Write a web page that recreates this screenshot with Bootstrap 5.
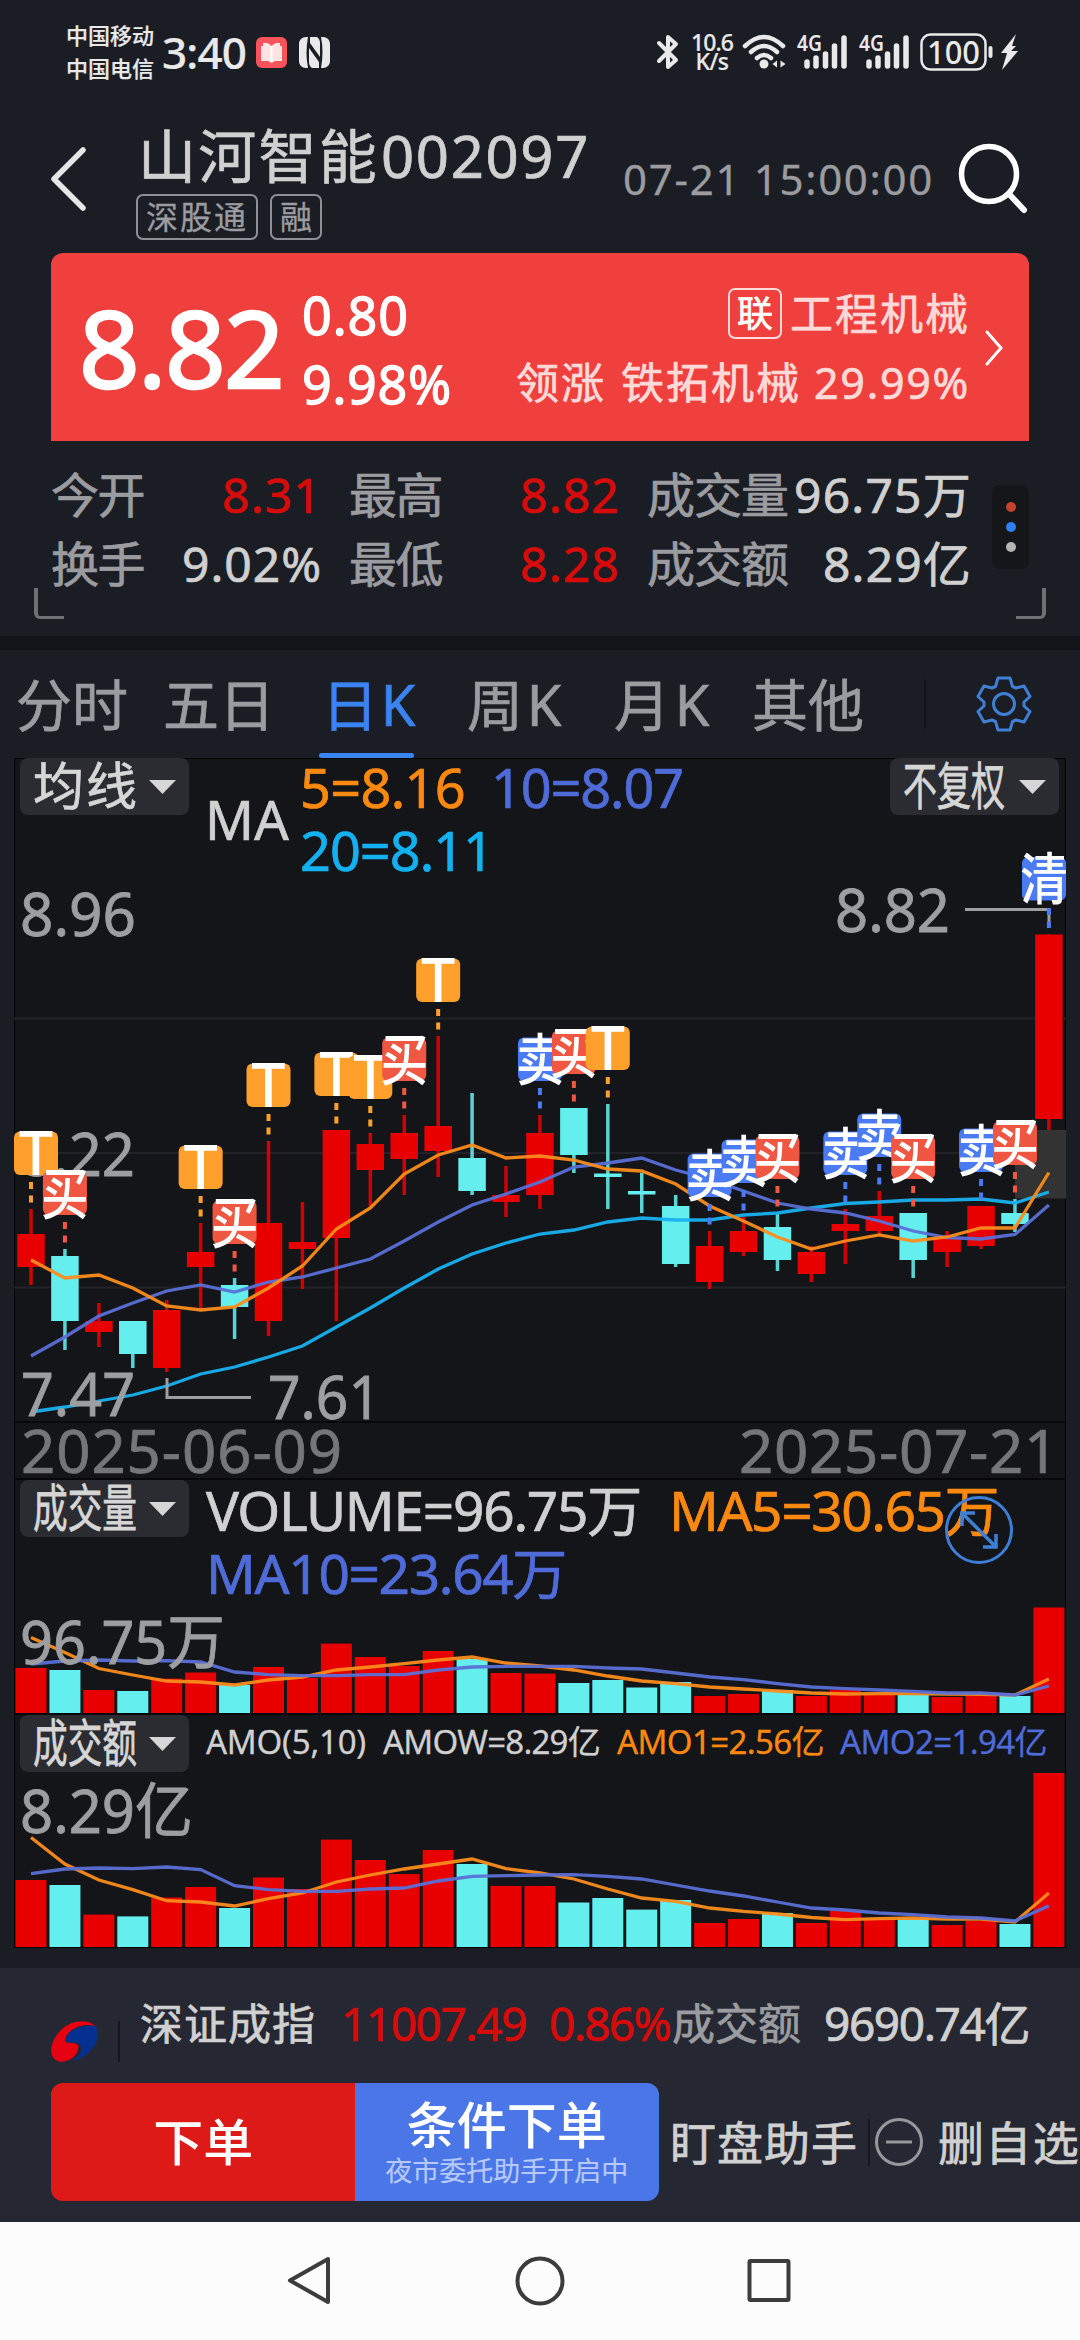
<!DOCTYPE html>
<html lang="zh-CN">
<head>
<meta charset="utf-8">
<meta name="viewport" content="width=device-width, initial-scale=1">
<title>山河智能 002097</title>
<link rel="stylesheet" href="https://cdn.jsdelivr.net/npm/bootstrap@5.3.0/dist/css/bootstrap.min.css">
<style>
body{width:1080px;height:2340px;overflow:hidden;background:#1b1d25;color:#d0d0d0;font-family:"Noto Sans","Noto Sans CJK SC",sans-serif;line-height:1;-webkit-text-stroke:.7px currentColor}
svg{display:block;flex:none;overflow:visible}
svg text{font-family:"Noto Sans","Noto Sans CJK SC",sans-serif}
[data-w]{display:inline-block;flex:none;white-space:nowrap}
.dim{color:#9b9ca0}.up{color:#d80b0b}.c5{color:#fb890f}.c10{color:#4f6bd8}.c20{color:#13b1f0}
/* status bar */
.statusbar{height:104px;padding:0 62px 0 66px;color:#e9e9ea;-webkit-text-stroke:.2px currentColor}
.carrier{font-size:22px;line-height:33px;font-weight:500}
.clock{font-size:44px;font-weight:500}
.net-rate{font-size:23px;line-height:19.5px;font-weight:500}
/* header */
.titlebar{height:149px;padding:19px 51px 0 51px}
.title-block{flex:none;margin-left:47px;width:487px}
.stock-name{font-size:58px;line-height:66px;margin-bottom:5px}
.stock-tag{border:2px solid #8f9095;border-radius:7px;height:46px;font-size:32px;line-height:42px;color:#9b9ca0;padding:0 8px;-webkit-text-stroke:.3px currentColor}
.stamp{font-size:42px;-webkit-text-stroke:.3px currentColor}
/* quote card */
.quote{margin:0 51px;height:188px;background:#ef403e;border-radius:12px 12px 0 0;color:#fff;padding-left:28px}
.price{font-size:106px;line-height:120px;margin-top:34px;-webkit-text-stroke:2.500px currentColor}
.delta{font-size:52px;line-height:69px;margin:27px 0 0 19px;-webkit-text-stroke:1.300px currentColor}
.sector{font-size:43px;line-height:69px;color:#fdd9d8;padding-top:26px}
.link-tag{border:2px solid #fdd9d8;border-radius:7px;width:54px;height:51px;line-height:47px;font-size:36px;color:#fff;text-align:center;margin-right:8px}
/* figures */
.stats{height:195px;padding:19px 51px 0 51px}
.stat-line{height:69px;font-size:48px}
.stat-line>div:nth-child(1){width:271px;margin-right:27px}
.stat-line>div:nth-child(2){width:271px;margin-right:27px}
.stat-line>div:nth-child(3){width:325px}
.dots{width:37px;height:84px;background:#15161a;border-radius:8px;gap:10px;margin-top:25px}
.dots i{width:10px;height:10px;border-radius:50%;background:#b5b5b5}
.dots i:nth-child(1){background:#c5412d}.dots i:nth-child(2){background:#2f80f2}
.corner{position:absolute;bottom:17px;width:30px;height:31px;border:solid #6f7074;border-width:0 0 3px 4px;border-radius:0 0 0 6px;left:34px}
.corner.flip{left:auto;right:34px;border-width:0 4px 3px 0;border-radius:0 0 6px 0}
.divider-bar{height:14px;background:#14151a}
/* tabs */
.period{height:108px;font-size:56px;padding-left:16px}
.period .nav-link{padding:0;line-height:107px;color:#9b9ca0;position:relative}
.period .nav-link:nth-child(2){margin-left:35px}
.period .nav-link:nth-child(3){margin-left:47px}
.period .nav-link:nth-child(4),.period .nav-link:nth-child(5){margin-left:49px}
.period .nav-link:nth-child(6){margin-left:38px}
.period .nav-link.active{color:#3a83f1}
.period .nav-link.active::after{content:"";position:absolute;left:-3px;width:95px;bottom:0;height:5px;border-radius:3px;background:#3a83f1}
/* charts */
.charts{margin:0 14px;height:1190px;width:1052px;background:#141519;outline:1px solid #050506;outline-offset:-1px}
.pane{position:relative;border-bottom:2px solid #08080a}
.pane>svg{position:absolute;inset:0}
.pane>.head{position:relative}
.picker{width:169px;height:57px;border-radius:8px;background:#2a2c31;border:0;padding:0 13px;margin-left:6px;display:flex;align-items:center;justify-content:space-between}
.pane-main{height:665px}.pane-date{height:57px;font-size:60px;line-height:55px;color:#757679;padding:0 7px 0 7px}
.pane-vol{height:235px}.pane-amo{height:233px}
.legend{font-size:54px;line-height:63px;margin:-2px 0 0 16px}
.legend-vol{font-size:55px;line-height:63px;margin:-2px 0 0 17px}
.legend-amo{font-size:33px;line-height:54px;margin-left:17px;-webkit-text-stroke:.3px currentColor}
.pane>svg.expand{inset:auto;left:930px;top:15px}
/* footer */
.dock{margin-top:20px;height:254px;background:#252732;padding:0 0 0 51px}
.index-line{height:115px}
.index-line .txt{font-size:46px;line-height:111px}
.order{width:608px;height:118px;border-radius:12px;overflow:hidden}
.order .btn{width:304px;border:0;border-radius:0;color:#fff;padding:0;font-size:50px;font-weight:500;line-height:1;-webkit-text-stroke:0}
.order .btn.b-red{background:#de1a18}.order .btn.b-blue{background:#4a76e8}
.b-blue small{font-size:27px;color:#b7c9f8;font-weight:400;display:block;margin-top:7px;-webkit-text-stroke:.2px currentColor}
.aux{font-size:46px}
.sysnav{height:118px;background:#fcfcfc}
</style>
<script src="https://cdn.jsdelivr.net/npm/bootstrap@5.3.0/dist/js/bootstrap.bundle.min.js"></script>
</head>
<body>
<header class="statusbar d-flex align-items-center">
  <div class="carrier d-flex flex-column"><span data-w="88">中国移动</span><span data-w="88">中国电信</span></div>
  <span class="clock ms-2" data-w="84">3:40</span>
  <svg style="margin-left:10px" width="31" height="31" viewBox="0 0 31 31"><rect width="31" height="31" rx="6" fill="#f8525a"/><path d="M7 6q5-1 8.500 3 3.500-4 8.500-3v3h2v15h-7l-3.500 2-3.500-2H5V9h2z" fill="#fde3e2"/><path d="M15.500 9v16" stroke="#fff" stroke-width="2"/></svg>
  <svg style="margin-left:12px" width="31" height="31" viewBox="0 0 31 31"><path d="M7 0C3 0 0 3 0 7v17c0 4 3 7 7 7h2Q6 16 9 0zM24 31c4 0 7-3 7-7V7c0-4-3-7-7-7h-2q3 15 0 31zM10 11l10 14V31h-7q-3-2-3-6zM21 20L11 6V0h7q3 2 3 6z" fill="#e9e9ea"/></svg>
  <svg class="ms-auto" width="22" height="36" viewBox="0 0 22 36"><path d="M2 9l17 17-8 7V3l8 7L2 27" fill="none" stroke="#e9e9ea" stroke-width="4" stroke-linejoin="round" stroke-linecap="round"/></svg>
  <div class="net-rate d-flex flex-column align-items-center" style="margin-left:12px"><span data-w="42">10.6</span><span data-w="33">K/s</span></div>
  <svg style="margin-left:9px" width="46" height="36" viewBox="0 0 46 36"><g fill="none" stroke="#e9e9ea" stroke-width="4.500" stroke-linecap="round"><path d="M3 12Q22 -6 41 12M9 18Q22 6 35 18M15 24Q22 18 29 24"/></g><circle cx="22" cy="30" r="4.500" fill="#e9e9ea"/><path d="M35 26.500v7l-4.500-3.500zM36.500 26v8M38.500 26.500l5 3.500-5 3.500z" fill="#e9e9ea"/></svg>
  <svg style="margin-left:9px" width="53" height="36" viewBox="0 0 53 36"><text x="0" y="16.500" font-size="22" font-weight="600" textLength="25" lengthAdjust="spacingAndGlyphs" fill="#e9e9ea">4G</text><g stroke="#e9e9ea" stroke-width="5.500" stroke-linecap="round"><path d="M10 28v4M19 24v8M28.500 20v12M37.500 12v20M47 4v28"/></g></svg>
  <svg style="margin-left:9px" width="53" height="36" viewBox="0 0 53 36"><text x="0" y="16.500" font-size="22" font-weight="600" textLength="25" lengthAdjust="spacingAndGlyphs" fill="#e9e9ea">4G</text><g stroke="#e9e9ea" stroke-width="5.500" stroke-linecap="round"><path d="M10 28v4M19 24v8M28.500 20v12M37.500 12v20M47 4v28"/></g></svg>
  <svg style="margin-left:7px" width="99" height="38" viewBox="0 0 99 38"><rect x="2.500" y="1.500" width="64" height="35" rx="9" fill="none" stroke="#e9e9ea" stroke-width="2.500"/><text x="8" y="30.500" font-size="32" font-weight="500" textLength="53" lengthAdjust="spacingAndGlyphs" fill="#e9e9ea">100</text><path d="M71.500 15v8" stroke="#e9e9ea" stroke-width="4" stroke-linecap="round"/><path d="M97 1L82 20h6l-5 17 16-19h-7l5-5h-4z" fill="#e9e9ea"/></svg>
</header>

<div class="titlebar d-flex">
  <svg style="margin-top:23px" width="38" height="66" viewBox="0 0 38 66"><path d="M32 4L3 33l29 29" fill="none" stroke="#e6e6e6" stroke-width="5.500" stroke-linecap="round" stroke-linejoin="round"/></svg>
  <div class="title-block">
    <div class="stock-name d-flex"><span style="margin-left:2px" data-w="241">山河智能</span><span style="margin-left:2px" data-w="209">002097</span></div>
    <div class="d-flex gap-2"><span class="stock-tag"><span data-w="102">深股通</span></span><span class="stock-tag ms-1"><span data-w="32">融</span></span></div>
  </div>
  <span class="stamp dim" style="margin-top:35px" data-w="311">07-21 15:00:00</span>
  <svg style="margin:18px 0 0 23px" width="72" height="72" viewBox="0 0 72 72"><circle cx="32" cy="33" r="27.500" fill="none" stroke="#fff" stroke-width="5.500"/><path d="M52 53l15 16" stroke="#fff" stroke-width="6" stroke-linecap="round"/></svg>
</div>

<section class="quote d-flex">
  <span class="price" data-w="204">8.82</span>
  <div class="delta d-flex flex-column align-items-start"><span data-w="107">0.80</span><span data-w="150">9.98%</span></div>
  <div class="sector ms-auto d-flex flex-column align-items-end">
    <div class="d-flex align-items-center"><span class="link-tag">联</span><span data-w="180">工程机械</span></div>
    <div class="d-flex"><span data-w="90">领涨</span><span style="margin-left:15px" data-w="180">铁拓机械</span><span style="margin-left:13px" data-w="156">29.99%</span></div>
  </div>
  <svg style="margin:76px 24px 0 13px" width="22" height="38" viewBox="0 0 22 38"><path d="M4 3l14 16L4 35" fill="none" stroke="#fff" stroke-width="3" stroke-linecap="round"/></svg>
</section>

<section class="stats position-relative d-flex">
  <div>
    <div class="stat-line d-flex align-items-center"><div class="d-flex justify-content-between"><span class="dim" data-w="93">今开</span><span class="up" data-w="100">8.31</span></div><div class="d-flex justify-content-between"><span class="dim" data-w="93">最高</span><span class="up" data-w="100">8.82</span></div><div class="d-flex justify-content-between"><span class="dim" data-w="141">成交量</span><span data-w="178">96.75万</span></div></div>
    <div class="stat-line d-flex align-items-center"><div class="d-flex justify-content-between"><span class="dim" data-w="93">换手</span><span data-w="140">9.02%</span></div><div class="d-flex justify-content-between"><span class="dim" data-w="93">最低</span><span class="up" data-w="100">8.28</span></div><div class="d-flex justify-content-between"><span class="dim" data-w="141">成交额</span><span data-w="149">8.29亿</span></div></div>
  </div>
  <div class="dots d-flex flex-column align-items-center justify-content-center ms-auto"><i></i><i></i><i></i></div>
  <span class="corner"></span><span class="corner flip"></span>
</section>
<div class="divider-bar"></div>

<nav class="period nav flex-nowrap align-items-center">
  <a class="nav-link" data-w="112">分时</a><a class="nav-link" data-w="112">五日</a><a class="nav-link active" data-w="96">日K</a><a class="nav-link" data-w="98">周K</a><a class="nav-link" data-w="100">月K</a><a class="nav-link" data-w="112">其他</a>
  <span style="width:2px;height:50px;background:#14151a;margin-left:60px"></span>
  <svg style="margin-left:50px" width="56" height="56" viewBox="-28 -28 56 56" fill="none" stroke="#3f7fd4" stroke-width="3" stroke-linejoin="round"><circle r="10.500"/><path d="M-6-26H6L8.500-17.500 12-16 20-18 26-7.500 20-2V2L26 7.500 20 18 12 16 8.500 17.500 6 26H-6L-8.500 17.500-12 16-20 18-26 7.500-20 2V-2L-26-7.500-20-18-12-16-8.500-17.500Z"/></svg>
</nav>

<main class="charts">
  <section class="pane pane-main">
    <svg id="k" width="1052" height="664" viewBox="14 758 1052 664"></svg>
    <div class="head d-flex">
      <button class="picker"><svg width="105" height="57"><text x="0" y="47" font-size="51" textLength="104" fill="#d6d6d6" stroke="#d6d6d6" stroke-width=".7">均线</text></svg><svg width="27" height="14"><path d="M0 0h27L13.500 14z" fill="#d6d6d6"/></svg></button>
      <div class="legend d-flex align-items-center"><span style="margin-right:11px" data-w="84">MA</span><div><div class="d-flex"><span class="c5" data-w="165">5=8.16</span><span class="c10" style="margin-left:26px" data-w="192">10=8.07</span></div><div class="c20"><span data-w="193">20=8.11</span></div></div></div>
      <button class="picker ms-auto" style="margin-right:7px"><svg width="103" height="57"><text x="0" y="47" font-size="51" textLength="102" lengthAdjust="spacingAndGlyphs" fill="#d6d6d6" stroke="#d6d6d6" stroke-width=".8">不复权</text></svg><svg width="27" height="14"><path d="M0 0h27L13.500 14z" fill="#d6d6d6"/></svg></button>
    </div>
  </section>
  <section class="pane pane-date d-flex justify-content-between"><span data-w="322">2025-06-09</span><span data-w="320">2025-07-21</span></section>
  <section class="pane pane-vol">
    <svg id="v" width="1052" height="234" viewBox="14 1480 1052 234"></svg>
    <div class="head d-flex">
      <button class="picker"><svg width="105" height="57"><text x="0" y="47" font-size="51" textLength="104" lengthAdjust="spacingAndGlyphs" fill="#d6d6d6" stroke="#d6d6d6" stroke-width=".8">成交量</text></svg><svg width="27" height="14"><path d="M0 0h27L13.500 14z" fill="#d6d6d6"/></svg></button>
      <div class="legend-vol"><div class="d-flex"><span data-w="435">VOLUME=96.75万</span><span class="c5" style="margin-left:28px" data-w="329">MA5=30.65万</span></div><div class="c10"><span data-w="360">MA10=23.64万</span></div></div>
    </div>
    <svg class="expand" width="70" height="70" viewBox="-35 -35 70 70" fill="none" stroke="#3d7fd6" stroke-width="3"><circle r="32.500"/><path d="M-17-17L17 17M-17-4V-17H-4M17 4V17H4" stroke-width="3.500"/></svg>
  </section>
  <section class="pane pane-amo">
    <svg id="a" width="1052" height="233" viewBox="14 1715 1052 233"></svg>
    <div class="head d-flex">
      <button class="picker"><svg width="105" height="57"><text x="0" y="47" font-size="51" textLength="104" lengthAdjust="spacingAndGlyphs" fill="#d6d6d6" stroke="#d6d6d6" stroke-width=".8">成交额</text></svg><svg width="27" height="14"><path d="M0 0h27L13.500 14z" fill="#d6d6d6"/></svg></button>
      <div class="legend-amo d-flex"><span data-w="160">AMO(5,10)</span><span style="margin-left:17px" data-w="217">AMOW=8.29亿</span><span class="c5" style="margin-left:17px" data-w="207">AMO1=2.56亿</span><span class="c10" style="margin-left:16px" data-w="207">AMO2=1.94亿</span></div>
    </div>
  </section>
</main>

<footer class="dock">
  <div class="index-line d-flex">
    <svg style="margin-top:52px" width="48" height="43" viewBox="0 0 48 43"><path d="M47 14C48 25 36 37 21 42 32 33 33 27 26 23 20 21 14 25 15 18 18 10 29 5 45 6z" fill="#06308f"/><path d="M44 6C38-1 20-1 9 11-2 23-3 38 8 41.500 17 43 27 36 27.500 27 27 20 15 26 14 20 15 11 30 2 44 6z" fill="#e60012"/></svg>
    <span style="width:2px;height:41px;background:#15161c;margin:53px 0 0 19px"></span>
    <div class="txt d-flex"><span style="margin-left:20px;font-size:43px" data-w="176">深证成指</span><span class="up" style="margin-left:25px" data-w="185">11007.49</span><span class="up" style="margin-left:23px" data-w="121">0.86%</span><span class="dim" style="margin-left:2px;font-size:43px" data-w="129">成交额</span><span style="margin-left:23px" data-w="205">9690.74亿</span></div>
  </div>
  <div class="d-flex align-items-center">
    <div class="order btn-group">
      <button class="btn b-red">下单</button>
      <button class="btn b-blue">条件下单<small>夜市委托助手开启中</small></button>
    </div>
    <span class="aux" style="margin-left:11px" data-w="188">盯盘助手</span>
    <span style="width:2px;height:47px;background:#15161c;margin-left:10px"></span>
    <svg style="margin-left:4px" width="50" height="50" viewBox="-25 -25 50 50" fill="none" stroke="#97989c" stroke-width="3"><circle r="22.500"/><path d="M-13 0H13"/></svg>
    <span class="aux" style="margin-left:14px" data-w="142">删自选</span>
  </div>
</footer>
<nav class="sysnav">
  <svg width="1080" height="118" viewBox="0 2222 1080 118" fill="none" stroke="#3c3c3c" stroke-width="4" stroke-linejoin="round"><path d="M328 2259v43L290 2280.500z"/><circle cx="540" cy="2281" r="22.500"/><rect x="749.500" y="2261" width="39" height="39" rx="1"/></svg>
</nav>

<script>
document.querySelectorAll('[data-w]').forEach(el => {
  const n = [...el.textContent].length, w = +el.dataset.w;
  el.style.letterSpacing = ((w - el.getBoundingClientRect().width) / n).toFixed(3) + 'px';
});

const RED = '#e80000', CYAN = '#64eeee', X = i => 31 + 33.93 * i;
const line = (ys, c) => `<polyline points="${ys.map((y, i) => X(i).toFixed(1) + ',' + y).join(' ')}" fill="none" stroke="${c}" stroke-width="3.300" stroke-opacity=".95"/>`;
const label = (x, y, s, w, fs = 60) => `<text x="${x}" y="${y}" font-size="${fs}" textLength="${w}" lengthAdjust="spacingAndGlyphs" fill="#9d9ea1" stroke="#9d9ea1" stroke-width=".8">${s}</text>`;

// One row per day: colour, high, body top, body bottom, low, trade mark
const days = [
['R',1209,1234,1267,1285,'T'],['C',1249,1256,1321,1350,'买'],['R',1303,1321,1332,1347],['C',1321,1321,1354,1368],['R',1300,1310,1368,1372],
['R',1223,1252,1267,1310,'T'],['C',1278,1285,1307,1339,'买'],['R',1141,1223,1321,1336,'T'],['R',1202,1242,1249,1289],['R',1130,1130,1238,1321,'T'],
['R',1133,1144,1170,1206,'T'],['R',1115,1133,1159,1195,'买'],['R',1036,1126,1151,1177,'T'],['C',1093,1158,1191,1195],['R',1166,1195,1202,1217],
['R',1115,1133,1195,1209,'卖'],['C',1108,1108,1155,1173,'买'],['C',1104,1173.5,1177,1209,'T'],['C',1173,1191,1194.5,1213],['C',1195,1206,1264,1267],
['R',1231,1246,1282,1289,'卖'],['R',1217,1231,1252,1256,'卖'],['C',1213,1227,1260,1271,'买'],['R',1246,1252,1274,1282],['R',1209,1224,1231,1264,'卖'],
['R',1191,1216,1231,1234,'卖'],['C',1213,1213,1260,1278,'买'],['R',1231,1238,1252,1267],['R',1206,1206,1246,1249,'卖'],['C',1199,1213,1224,1232,'买'],
['R',934.5,934.5,1119,1130,'清']];
const ma5=[1260,1278,1275,1288,1306,1310,1307,1288,1266,1229,1208,1174,1155,1145,1158,1156,1160,1169,1171,1184,1206,1221,1237,1249,1241,1235,1241,1237,1228,1228,1172.5];
const ma10=[1356,1337,1316,1303,1291,1285,1292,1282,1277,1268,1259,1241,1222,1205,1194,1182,1167,1163,1158,1170,1179,1191,1203,1209,1213,1221,1231,1237.5,1239,1234.5,1205];
const ma20=[1412,1407,1401,1395,1386,1374,1367,1357,1346,1327,1308,1288,1269,1254,1243,1234,1230,1222,1218,1220,1220,1215,1213,1208,1203.5,1202,1200,1200,1199,1203,1192];
let s = [1018.5,1153,1287.5].map(y => `<path d="M14 ${y}H1066" stroke="#222329" stroke-width="2"/>`).join('');
s += '<path d="M1015 1130h51v68.500h-51z" fill="#333333"/>';
days.forEach(([c,h,t,b,l], i) => { const f = c === 'R' ? RED : CYAN, x = X(i);
  s += `<path d="M${x} ${h}V${l}" stroke="${f}" stroke-width="3.500" stroke-opacity=".88"/><rect x="${x-13.75}" y="${t}" width="27.500" height="${b-t}" fill="${f}"/>`; });
s += line(ma20,'#18b0ef') + line(ma10,'#5a6fd6') + line(ma5,'#fb8c1c');
s += label(20,936,'8.96',116) + label(835,931.5,'8.82',115) + label(20,1176,'8.22',115) + label(21,1416,'7.47',114) + label(268,1419,'7.61',113);
s += '<path d="M167 1378v19.500h84M965 909.500h84v18" fill="none" stroke="#9d9ea1" stroke-width="3"/>';
const tone = {T:'#ff9f2c','买':'#ef5743','卖':'#4a7bf3','清':'#4a7bf3'};
days.forEach(([c,h,,,,m], i) => { if (!m) return;
  const x = X(i), cx = Math.min(Math.max(x, 36), 1044), y = h - 77.5, f = tone[m];
  s += m === '清' ? `<path d="M${x} 908v20" stroke="${f}" stroke-width="4" stroke-dasharray="7 6.500"/>` : `<path d="M${x} ${y+50.5}v20.500" stroke="${f}" stroke-width="4" stroke-dasharray="7 6.500"/>`;
  s += `<rect x="${cx-22}" y="${y}" width="44" height="43.500" rx="6" fill="${f}"/>`;
  s += m === 'T' ? `<text x="${cx}" y="${y+43.5}" font-size="61" font-weight="500" text-anchor="middle" fill="#fff">T</text>`
    : `<text x="0" y="0" transform="translate(${cx} ${y+42}) scale(.9 1.040)" font-size="53" font-weight="500" text-anchor="middle" fill="#fff">${m}</text>`; });
document.getElementById('k').innerHTML = s;

const bars = (tops, base) => tops.map((y, i) => `<rect x="${X(i)-15.5}" y="${y}" width="31" height="${base-y}" fill="${days[i][0]==='R'?RED:CYAN}"/>`).join('');
const vol=[1668,1670,1690,1691,1678.6,1672.5,1685,1667,1678,1643.6,1657,1666,1651,1659,1673,1673.6,1683,1680,1687.5,1682,1696,1694,1690,1696,1690,1694.6,1695,1697,1696,1696,1607.5];
const v5=[1637.5,1652.5,1668.5,1675,1681,1682,1685,1680,1677,1670,1667,1663.6,1660,1657,1663,1666,1670,1676,1681,1683.6,1687,1689,1691,1693,1694,1693.6,1693.6,1694,1694.3,1695,1679];
const v10=[1664,1661,1660,1661,1660.7,1662,1672,1674.6,1675.7,1675.7,1674.6,1674.6,1670,1667,1666.4,1666.4,1666.4,1668,1669,1673,1677,1679.6,1683.6,1687,1688.6,1690,1691.4,1693,1693,1695,1686];
document.getElementById('v').innerHTML = bars(vol,1713) + line(v5,'#fb8c1c') + line(v10,'#5a6fd6') + label(20,1663.5,'96.75万',205);
const amo=[1880,1885,1914.6,1916.4,1897.5,1887,1908,1877.5,1889,1839.6,1860,1874,1850,1864,1886,1886,1902.5,1898,1909.6,1900,1923,1919,1913,1923,1911,1919,1918,1925,1921,1924,1773];
const a5=[1837.5,1864,1880,1889.6,1900.7,1902,1906,1898.6,1893,1882,1875,1869,1864,1859,1868.6,1873,1879,1889,1898,1901.4,1908,1911.4,1914,1917.5,1919.6,1918.6,1918,1919,1919,1922,1893];
const a10=[1873.6,1869,1868,1868.6,1867,1869.6,1885.7,1889.6,1891.4,1891.4,1889,1888,1881,1876.4,1875.7,1875,1874.6,1876.4,1879,1885,1891,1896,1902,1908,1910,1913,1914.6,1917,1918,1921,1905.7];
document.getElementById('a').innerHTML = bars(amo,1947) + line(a5,'#fb8c1c') + line(a10,'#5a6fd6') + label(20,1832.5,'8.29亿',173);
</script>
</body>
</html>
